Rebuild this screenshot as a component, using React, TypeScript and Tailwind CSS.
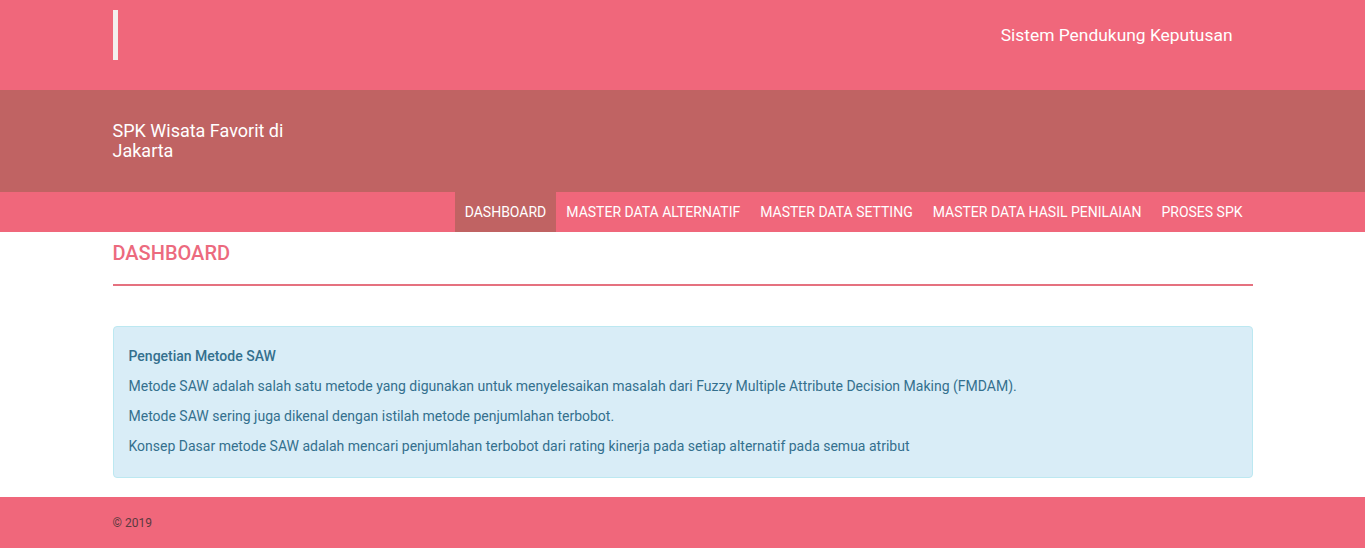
const menu = ['Dashboard', 'Master Data Alternatif', 'Master Data Setting', 'Master Data Hasil Penilaian', 'Proses SPK']

export default function App() {
  return (
    <div className="min-h-[550px] bg-white font-['Roboto',sans-serif]">
      {/* top header */}
      <div className="h-[90px] bg-[#f0677b]">
        <div className="mx-auto flex h-full w-[1140px] items-start justify-between">
          <div className="mt-[10px] h-[50px] w-[5px] bg-[#f4eeee]" />
          <div className="mr-[20px] mt-[23px] text-[17.4px] leading-[24px] text-white">Sistem Pendukung Keputusan</div>
        </div>
      </div>

      {/* brand band */}
      <div className="h-[102px] bg-[#c06363]">
        <div className="mx-auto w-[1140px] pt-[31px]">
          <div className="w-[190px] text-[18px] leading-[20px] text-white">SPK Wisata Favorit di Jakarta</div>
        </div>
      </div>

      {/* nav */}
      <div className="h-[40px] bg-[#f0677b]">
        <div className="mx-auto flex h-full w-[1140px] justify-end">
          {menu.map((m, i) => (
            <div key={m} className={'flex items-center px-[10px] text-[14px] uppercase text-white ' + (i === 0 ? 'bg-[#c06363]' : '')}>
              {m}
            </div>
          ))}
        </div>
      </div>

      {/* content */}
      <div className="mx-auto w-[1140px] pb-[19px]">
        <h1 className="pt-[9px] text-[20px] font-medium leading-[24px] text-[#ec6a7e]">DASHBOARD</h1>
        <div className="mt-[19px] h-[2px] bg-[#e5717f]" />
        <div className="mt-[40px] rounded-[4px] border border-[#bce8f1] bg-[#d9edf7] px-[15px] pb-[21px] pt-[19px] text-[14px] leading-[20px] text-[#34708e]">
          <div className="font-medium">Pengetian Metode SAW</div>
          <p className="mt-[10px]">Metode SAW adalah salah satu metode yang digunakan untuk menyelesaikan masalah dari Fuzzy Multiple Attribute Decision Making (FMDAM).</p>
          <p className="mt-[10px]">Metode SAW sering juga dikenal dengan istilah metode penjumlahan terbobot.</p>
          <p className="mt-[10px]">Konsep Dasar metode SAW adalah mencari penjumlahan terbobot dari rating kinerja pada setiap alternatif pada semua atribut</p>
        </div>
      </div>

      {/* footer */}
      <div className="h-[51px] bg-[#f0677b]">
        <div className="mx-auto flex h-full w-[1140px] items-center text-[12px] text-[#5b3a40]">© 2019</div>
      </div>
    </div>
  )
}
